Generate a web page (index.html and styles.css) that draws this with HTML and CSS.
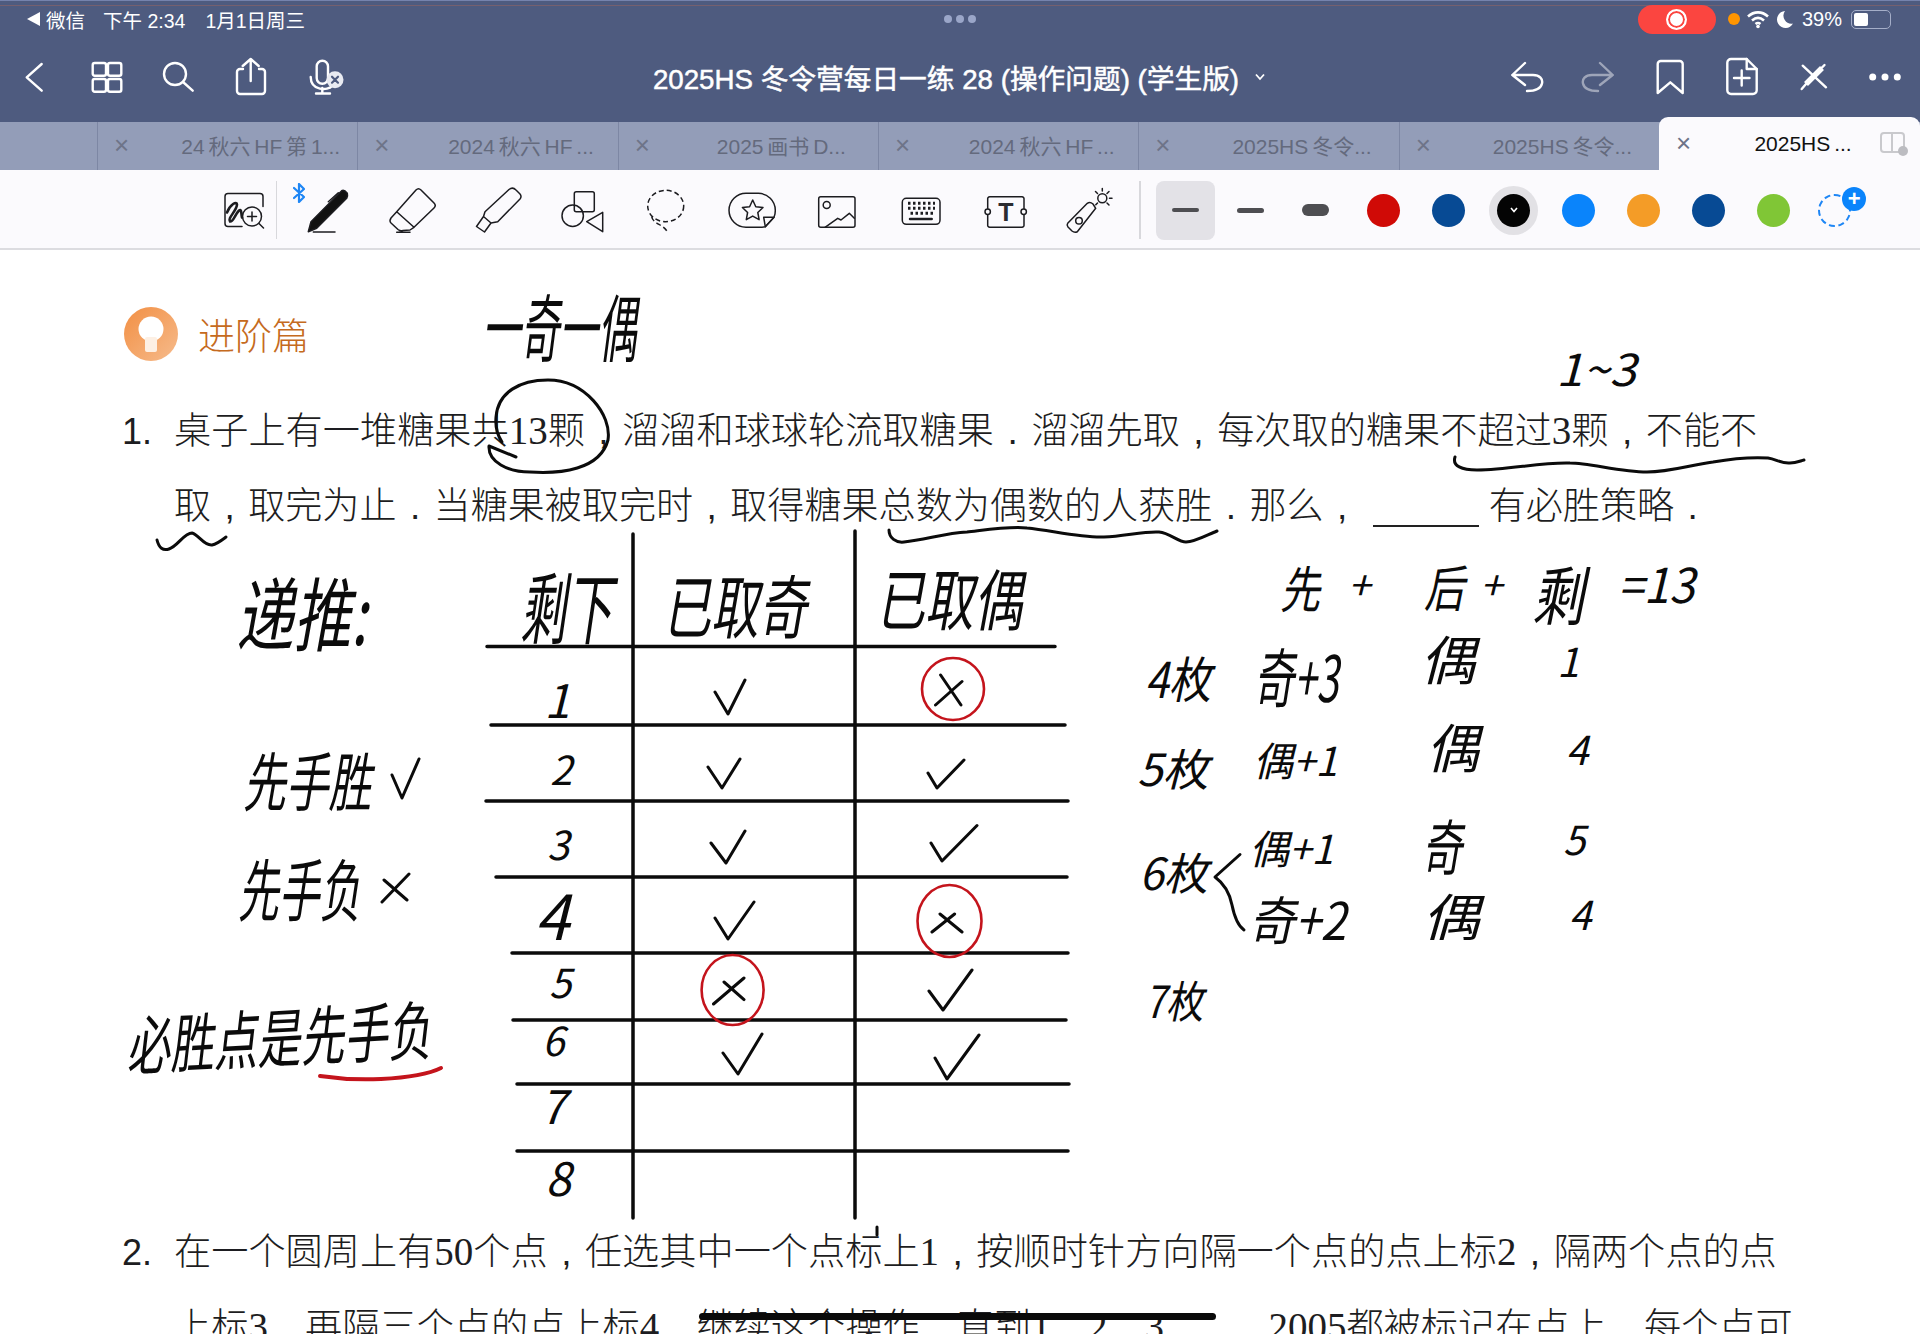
FILE: index.html
```html
<!DOCTYPE html>
<html lang="zh-CN">
<head>
    <meta charset="UTF-8">
    <meta name="viewport" content="width=device-width, initial-scale=1.0">
    <title>2025HS冬令营每日一练 28</title>
    <link rel="stylesheet" href="styles.css">
</head>
<body>
<div class="page">
    <header class="appbar">
        <div class="strip"></div>
        <div class="status">
            <div class="status-left">
                <span class="wechat-back"></span><span>微信</span>
                <span class="status-time">下午 2:34</span>
                <span class="status-date">1月1日周三</span>
            </div>
            <div class="status-dots"><i></i><i></i><i></i></div>
            <div class="status-right">
                <div class="rec"><span class="rec-dot"></span></div>
                <span class="mic-dot"></span>
                <svg class="wifi" width="24" height="20" viewBox="0 0 24 20"><path d="M2 7.500C8 2 16 2 22 7.500" /><path d="M6 11.500C10 8 14 8 18 11.500" /><path d="M9.500 15C11 13.800 13 13.800 14.500 15" /><circle cx="12" cy="17.500" r="1.800" /></svg>
                <svg class="moon" width="18" height="20" viewBox="0 0 18 20"><path d="M9 2A8.500 8.500 0 1 0 17 14.500A8 8 0 0 1 9 2Z" /></svg>
                <span class="battery-text">39%</span>
                <div class="battery"><span class="battery-fill"></span></div>
            </div>
        </div>
        <nav class="navrow">
            <div class="nav-group">
                <div class="nav-btn"><svg width="40" height="40" viewBox="0 0 40 40"><path d="M25.700 7L10.700 20.300L25.700 33.700" /></svg></div>
                <div class="nav-btn"><svg width="40" height="40" viewBox="0 0 40 40"><rect x="4.700" y="6" width="13.300" height="12.700" rx="2" /><rect x="20" y="6" width="13.300" height="12.700" rx="2" /><rect x="4.700" y="22" width="13.300" height="12.700" rx="2" /><rect x="20" y="22" width="13.300" height="12.700" rx="2" /></svg></div>
                <div class="nav-btn"><svg width="40" height="40" viewBox="0 0 40 40"><circle cx="15" cy="17" r="11" /><path d="M23 25L32.700 33.700" /></svg></div>
                <div class="nav-btn"><svg width="40" height="40" viewBox="0 0 40 40"><path d="M11 12H8A3 3 0 0 0 5 15V34A3 3 0 0 0 8 37H30A3 3 0 0 0 33 34V15A3 3 0 0 0 30 12H27" /><path d="M18.700 24V2.500M10.700 9L18.700 2L26.700 9" /></svg></div>
                <div class="nav-btn"><svg width="40" height="40" viewBox="0 0 40 40"><rect x="12.700" y="3.700" width="11.300" height="23" rx="5.600" /><path d="M6.700 20C6.700 34 24 34 28 29M18.300 31V36M12 36.500H26" /><circle class="mic-badge" cx="31" cy="22.700" r="8.500" /><path class="mic-x" d="M28 19.700L34 25.700M34 19.700L28 25.700" /></svg></div>
            </div>
            <div class="doc-title">2025HS 冬令营每日一练 28 (操作问题) (学生版)<svg class="title-caret" width="14" height="10" viewBox="0 0 14 10"><path d="M3 2.500L7 7L11 2.500" /></svg></div>
            <div class="nav-group nav-group-right">
                <div class="nav-btn"><svg width="40" height="40" viewBox="0 0 40 40"><path d="M18 6L5.300 18L18 28M5.300 18H26C33 18 36 22 35 26.500C34 31 30 34 20 34" /></svg></div>
                <div class="nav-btn nav-off"><svg width="40" height="40" viewBox="0 0 40 40"><path d="M22 6L34.700 18L22 28M34.700 18H14C7 18 4 22 5 26.500C6 31 10 34 20 34" /></svg></div>
                <div class="nav-btn"><svg width="40" height="40" viewBox="0 0 40 40"><path d="M7.700 36V7A3 3 0 0 1 10.700 4H29.700A3 3 0 0 1 32.700 7V36L20.300 25.300Z" /></svg></div>
                <div class="nav-btn"><svg width="40" height="40" viewBox="0 0 40 40"><path d="M25.700 2H10A3.700 3.700 0 0 0 6.300 5.700V33.300A3.700 3.700 0 0 0 10 37H32A3.700 3.700 0 0 0 35.700 33.300V12Z" /><path d="M25.700 2V12H35.700M20.700 13.500V28.500M13 21H28.500" /></svg></div>
                <div class="nav-btn"><svg width="40" height="40" viewBox="0 0 40 40"><path d="M9.700 8.700L33 30.300" /><path class="pen-stroke" d="M29 11L13 27" /><path d="M31.500 8L27 12.500M13 27L8.700 32" /></svg></div>
                <div class="nav-btn"><svg width="40" height="40" viewBox="0 0 40 40"><circle class="nav-dot" cx="8.700" cy="20" r="3.500" /><circle class="nav-dot" cx="21" cy="20" r="3.500" /><circle class="nav-dot" cx="33.300" cy="20" r="3.500" /></svg></div>
            </div>
        </nav>
    </header>

    <div class="tabs">
        <div class="tab-spacer"></div>
        <div class="tab"><span class="tab-close">×</span><span class="tab-title">24 秋六 HF 第 1...</span></div>
        <div class="tab"><span class="tab-close">×</span><span class="tab-title">2024 秋六 HF ...</span></div>
        <div class="tab"><span class="tab-close">×</span><span class="tab-title">2025 画书 D...</span></div>
        <div class="tab"><span class="tab-close">×</span><span class="tab-title">2024 秋六 HF ...</span></div>
        <div class="tab"><span class="tab-close">×</span><span class="tab-title">2025HS 冬令...</span></div>
        <div class="tab"><span class="tab-close">×</span><span class="tab-title">2025HS 冬令...</span></div>
        <div class="tab tab-active">
            <span class="tab-close">×</span><span class="tab-title">2025HS ...</span>
            <svg class="tab-split" width="28" height="24" viewBox="0 0 28 24"><rect x="1" y="1" width="23" height="19" rx="3" /><path d="M12 1V20" /><circle cx="23" cy="19" r="5" /></svg>
        </div>
    </div>

    <div class="toolbar">
        <div class="tool tool-first">
            <svg width="56" height="56" viewBox="0 0 56 56"><g transform="translate(4 2.500)"><path d="M43 22V12A3 3 0 0 0 40 9H8A3 3 0 0 0 5 12V39A3 3 0 0 0 8 42H22" /><circle cx="32" cy="32" r="9.500" /><path d="M39 39L43.500 43.500M32 27.500V36.500M27.500 32H36.500" /><path class="scribble" d="M7 28C10 20 17 16 17 20C17 26 7 34 10 37C13 38 15 30 19 26C22 24 21 30 22 33" /></g></svg>
        </div>
        <div class="tool tool-pen">
            <svg class="bluetooth" width="12" height="20" viewBox="0 0 12 20"><path d="M1 5L11 14L6 19V1L11 6L1 15" /></svg>
            <svg width="56" height="56" viewBox="0 0 56 56"><path class="solid" d="M9.300 49.700L12 39.700L42.700 8.700Q45 7 48.300 11.300Q49 14 47.700 16.300L17.700 46.300Z" /><path d="M29.300 19.700L39.300 10.700M14.300 50H36" /></svg>
        </div>
        <div class="tool">
            <svg width="56" height="56" viewBox="0 0 56 56"><path d="M11.700 29.700L31 8Q33.500 5.500 36 8L49 21Q51.500 23.500 49 26L29 45.300M11.700 29.700L29 45.300M11.700 29.700L6 36Q4 39 6 41L13 47.500Q15.500 49.500 18 48.500L25 48L29 45.300M11.700 50.300H25" /></svg>
        </div>
        <div class="tool">
            <svg width="56" height="56" viewBox="0 0 56 56"><path d="M15 29.700L39 7.500Q42.700 4.500 46 8L50 12Q52 14.500 50 17L27.700 39.700L21 41L13.500 34.500ZM13.500 34.500L6.500 44.500L14.500 50L21 41" /></svg>
        </div>
        <div class="tool">
            <svg width="56" height="56" viewBox="0 0 56 56"><rect x="20.300" y="9.700" width="20" height="20" rx="2" /><circle cx="18.700" cy="33.700" r="10.700" /><path d="M48.700 30.300V49.700L32.700 39.700Z" /></svg>
        </div>
        <div class="tool">
            <svg width="56" height="56" viewBox="0 0 56 56"><ellipse class="dashed" cx="26.700" cy="24" rx="18" ry="15.700" /><path class="dashed" d="M12.700 34.700C14 42 24 42 28.300 49.700" /></svg>
        </div>
        <div class="tool">
            <svg width="56" height="56" viewBox="0 0 56 56"><path d="M22 11.300H34A17 17 0 0 1 51.300 28.500C51.300 30 51 33 50 35.300L41.300 44.700C40 45 38 45.300 36 45.300H22A17 17 0 0 1 22 11.300Z" /><path d="M39.700 35.300H50L41.300 44.700Z" /><path d="M28.700 18L31.800 24.700L39 25.500L33.800 30.500L35.100 37.700L28.700 34.100L22.300 37.700L23.600 30.500L18.400 25.500L25.600 24.700Z" /></svg>
        </div>
        <div class="tool">
            <svg width="56" height="56" viewBox="0 0 56 56"><rect x="10.700" y="14.700" width="36.300" height="30.600" rx="2" /><circle cx="18.700" cy="23" r="3.500" /><path d="M17 45.300L29.700 36.300L33 38L41.300 31.300L46.300 36.300" /></svg>
        </div>
        <div class="tool">
            <svg width="56" height="56" viewBox="0 0 56 56"><rect x="9.300" y="16.300" width="37.700" height="26" rx="4" /><path class="keys" d="M15 21.300H42M15 26.300H42M17.500 31.300H40" /><path class="bar" d="M17 37H38.700" /></svg>
        </div>
        <div class="tool">
            <svg width="56" height="56" viewBox="0 0 56 56"><path d="M9.700 26.500V17A2 2 0 0 1 11.700 14.700H44A2 2 0 0 1 46 17V26.500M9.700 33V43A2 2 0 0 0 11.700 45.300H44A2 2 0 0 0 46 43V33" /><circle cx="9.700" cy="29.700" r="2.700" /><circle cx="45.700" cy="29.700" r="2.700" /><text class="tool-t" x="28" y="38.500" text-anchor="middle">T</text></svg>
        </div>
        <div class="tool">
            <svg width="56" height="56" viewBox="0 0 56 56"><path d="M5.700 41.300L25.300 21.300Q28 19.500 31 22L33.700 26.300L15.300 49.700Q12.500 51 10 49L6 45Q4.500 43 5.700 41.300Z" /><circle cx="17" cy="38.700" r="3.300" /><circle cx="40.300" cy="16.300" r="4.500" /><path d="M40.300 6.500V9M50 16.300H47.500M33.500 9.500L35.500 11.500M47 9.500L45 11.500M47 23L45 21M33.800 22.800L35.500 21" /></svg>
        </div>
        <div class="tool-divider"></div>
        <div class="stroke-opt stroke-selected"><span class="stroke-line stroke-thin"></span></div>
        <div class="stroke-opt"><span class="stroke-line stroke-mid"></span></div>
        <div class="stroke-opt"><span class="stroke-line stroke-thick"></span></div>
        <div class="colors">
            <div class="color"><span class="swatch swatch-red"></span></div>
            <div class="color"><span class="swatch swatch-navy"></span></div>
            <div class="color color-active"><span class="swatch swatch-black"><svg width="12" height="8" viewBox="0 0 12 8"><path d="M3 2L6 5.500L9 2" /></svg></span></div>
            <div class="color"><span class="swatch swatch-blue"></span></div>
            <div class="color"><span class="swatch swatch-orange"></span></div>
            <div class="color"><span class="swatch swatch-navy"></span></div>
            <div class="color"><span class="swatch swatch-green"></span></div>
            <div class="color-add"><span class="add-ring"></span><span class="add-badge">+</span></div>
        </div>
    </div>

    <main class="doc">
        <div class="section-head">
            <svg width="54" height="54" viewBox="0 0 54 54"><defs><linearGradient id="bulbBg" x1="0" y1="0" x2="1" y2="1"><stop offset="0" stop-color="#f28f43" /><stop offset="1" stop-color="#f6bb8c" /></linearGradient></defs><circle cx="27" cy="27" r="27" fill="url(#bulbBg)" /><circle cx="27" cy="22" r="12.500" fill="#fff" /><rect x="21" y="30" width="12" height="15" rx="2" fill="#fdf0e4" /></svg>
            <span class="section-name">进阶篇</span>
        </div>
        <div class="q-line"><span class="q-num">1.</span>桌子上有一堆糖果共<span class="num">13</span>颗<span class="p">,</span>溜溜和球球轮流取糖果<span class="p">.</span>溜溜先取<span class="p">,</span>每次取的糖果不超过<span class="num">3</span>颗<span class="p">,</span>不能不</div>
        <div class="q-line q-line-tight">取<span class="p">,</span>取完为止<span class="p">.</span>当糖果被取完时<span class="p">,</span>取得糖果总数为偶数的人获胜<span class="p">.</span>那么<span class="p">,</span><span class="blank"></span>有必胜策略<span class="p">.</span></div>
        <div class="work-space"></div>
        <div class="q-line"><span class="q-num">2.</span>在一个圆周上有<span class="num">50</span>个点<span class="p">,</span>任选其中一个点标上<span class="num">1</span><span class="p">,</span>按顺时针方向隔一个点的点上标<span class="num">2</span><span class="p">,</span>隔两个点的点</div>
        <div class="q-line">上标<span class="num">3</span><span class="p">,</span>再隔三个点的点上标<span class="num">4</span><span class="p">,</span>继续这个操作<span class="p">,</span>直到<span class="num">1</span><span class="p">,</span><span class="num">2</span><span class="p">,</span><span class="num">3</span><span class="p">,</span><span class="ellipsis">…</span><span class="p">,</span><span class="num">2005</span>都被标记在点上<span class="p">.</span>每个点可</div>
    </main>

    <!-- handwritten notes on the page, coordinates are the page itself -->
    <svg class="ink" width="1920" height="1334" viewBox="0 0 1920 1334">
        <path class="rule" d="M487 646.500H1055M491 725H1065M486 801H1068M496 877H1067M512 953H1068M513 1020H1066M517 1084H1069M517 1151H1068M633 534V1218M855 531V1218" />
        <path class="pen" d="M516 457L489 446C488 462 508 472 530 472C560 474 600 470 608 440C612 415 585 380 548 380C520 380 498 392 496 417C495 428 498 436 502 442" />
        <path class="pen" d="M1455 457C1452 466 1462 470 1477 470C1510 470 1540 462 1570 463C1590 463 1620 472 1647 472C1670 472 1690 465 1713 462C1730 459 1750 457 1768 458C1776 459 1782 464 1790 463C1796 463 1800 461 1804 460" />
        <path class="pen" d="M157 540C159 548 163 551 169 549C178 546 184 533 192 533C198 534 204 546 212 545C217 544 222 540 226 537" />
        <path class="pen" d="M889 530C889 538 896 543 904 542C925 540 945 533 967 532C985 530 1010 526 1027 528C1050 530 1080 538 1104 537C1125 536 1145 531 1159 532C1170 533 1178 542 1186 542C1195 542 1207 535 1217 531" />
        <path class="pen" d="M877 1227V1235" />

        <path class="pen" d="M715 692L728 714L745 680M708 767L722 788L740 759M711 843L726 863L745 831M715 918L728 939L754 902M723 1053L738 1074L762 1034" />
        <path class="pen" d="M928 773L937 788L964 760M931 843L942 861L977 825.500M929 991L943 1010L972 970M935 1058L947 1079L979 1035" />
        <path class="pen" d="M940.600 675L961 705M962 681.500L935.500 705M940 914L962 932M954.600 914L932 932M724 982L744 999.600M744 978L713.500 1004" />
        <ellipse class="red" cx="953" cy="689" rx="31" ry="31" />
        <ellipse class="red" cx="949.500" cy="921" rx="32" ry="36" />
        <ellipse class="red" cx="732.600" cy="990" rx="31" ry="35" />
        <path class="red red-thick" d="M320 1076C340 1079 360 1080 381 1079C400 1078 425 1076 441 1068" />

        <path class="pen" d="M392 775L402 798L419 759M384 880L407 900M409 874L382 902" />
        <path class="pen" d="M1240 854.500L1215 877C1226 885 1230 895 1232 905C1234 915 1237 925 1244 930" />

        <text class="note note-lg" transform="translate(482 356) scale(0.84 1.600)">一奇一偶</text>
        <text class="note note-md" transform="translate(1556 386) scale(1.200 1.100)">1~3</text>
        <text class="note note-lg" transform="translate(236 645) scale(1.250 1.750)">递推:</text>
        <text class="note note-lg" transform="translate(520 638) scale(1 1.700)">剩下</text>
        <text class="note note-lg" transform="translate(663 633) scale(1.040 1.500)">已取奇</text>
        <text class="note note-lg" transform="translate(876 625) scale(1.060 1.450)">已取偶</text>

        <text class="note note-lg digit" x="557" y="718">1</text>
        <text class="note note-md digit" x="561" y="785">2</text>
        <text class="note note-md digit" x="558" y="860">3</text>
        <text class="note note-xl digit" x="552" y="940">4</text>
        <text class="note note-md digit" x="560" y="998">5</text>
        <text class="note note-md digit" x="553" y="1056">6</text>
        <text class="note note-lg digit" x="553" y="1124">7</text>
        <text class="note note-lg digit" x="558" y="1196">8</text>

        <text class="note note-md" transform="translate(243 806) scale(1.070 1.600)">先手胜</text>
        <text class="note note-md" transform="translate(238 916) scale(1.020 1.700)">先手负</text>
        <text class="note note-md" transform="translate(127 1070) rotate(-3) scale(1.090 1.600)">必胜点是先手负</text>

        <text class="note note-md" transform="translate(1280 608) scale(1 1.250)">先</text>
        <text class="note note-md" x="1348" y="600">+</text>
        <text class="note note-md" transform="translate(1424 607) scale(1 1.250)">后</text>
        <text class="note note-md" x="1480" y="600">+</text>
        <text class="note note-md" transform="translate(1532 620) scale(1.300 1.600)">剩</text>
        <text class="note note-md" transform="translate(1618 603) scale(1.150 1.200)">=13</text>

        <text class="note note-sm" transform="translate(1145 698) scale(1.250 1.450)">4枚</text>
        <text class="note note-md" transform="translate(1254 702) scale(1 1.600)">奇+3</text>
        <text class="note note-lg" transform="translate(1420 680) scale(1.200 1.150)">偶</text>
        <text class="note note-md digit" x="1568" y="677">1</text>

        <text class="note note-sm" transform="translate(1137 786) scale(1.350 1.300)">5枚</text>
        <text class="note note-md" x="1253" y="776">偶+1</text>
        <text class="note note-lg" transform="translate(1426 768) scale(1.150 1.150)">偶</text>
        <text class="note note-md digit" x="1577" y="765">4</text>

        <text class="note note-sm" transform="translate(1139 890) scale(1.300 1.300)">6枚</text>
        <text class="note note-md" x="1249" y="864">偶+1</text>
        <text class="note note-md" transform="translate(1422 870) scale(1 1.500)">奇</text>
        <text class="note note-md digit" x="1574" y="855">5</text>

        <text class="note note-md" transform="translate(1249 940) scale(1.150 1.300)">奇+2</text>
        <text class="note note-lg" transform="translate(1422 936) scale(1.250 1.100)">偶</text>
        <text class="note note-md digit" x="1580" y="930">4</text>

        <text class="note note-sm" transform="translate(1145 1018) scale(1.100 1.300)">7枚</text>
    </svg>

    <div class="home-bar"></div>
</div>
</body>
</html>
```

FILE: styles.css
```css
* {
    box-sizing: border-box;
}
html, body {
    margin: 0;
    padding: 0;
}
body {
    font-family: "Liberation Sans", "Noto Sans CJK SC", sans-serif;
    background: #fff;
}
.page {
    position: relative;
    width: 1920px;
    height: 1334px;
    overflow: hidden;
    background: #fff;
}

/* top bar */
.appbar {
    height: 122px;
    background: #4e5b7f;
    color: #fff;
}
.strip {
    height: 6px;
    border-top: 1px solid #7583ad;
    border-bottom: 1px solid #75606f;
}
.status {
    display: grid;
    grid-template-columns: 1fr auto 1fr;
    grid-template-rows: 26px;
    align-items: center;
    height: 26px;
    font-size: 19.500px;
}
.status-left {
    display: flex;
    align-items: center;
    padding-left: 27px;
}
.wechat-back {
    width: 0;
    height: 0;
    border-top: 7px solid transparent;
    border-bottom: 7px solid transparent;
    border-right: 13px solid #fff;
    margin-right: 6px;
}
.status-time {
    margin-left: 18px;
}
.status-date {
    margin-left: 20px;
}
.status-dots {
    display: flex;
    gap: 4px;
}
.status-dots i {
    width: 8px;
    height: 8px;
    border-radius: 50%;
    background: #9aa6c8;
}
.status-right {
    display: flex;
    align-items: center;
    justify-content: flex-end;
    height: 26px;
    padding-right: 29px;
}
.rec {
    display: flex;
    align-items: center;
    justify-content: center;
    flex: none;
    width: 78px;
    height: 29px;
    border-radius: 15px;
    background: #fb4540;
}
.rec-dot {
    width: 21px;
    height: 21px;
    border-radius: 50%;
    background: #fff;
    border: 2px solid #fff;
    box-shadow: inset 0 0 0 2px #fb4540;
}
.mic-dot {
    width: 12px;
    height: 12px;
    margin-left: 12px;
    border-radius: 50%;
    background: #ff9500;
}
.wifi {
    margin-left: 6px;
    fill: none;
    stroke: #fff;
    stroke-width: 2.600;
}
.wifi circle {
    fill: #fff;
    stroke: none;
}
.moon {
    margin-left: 6px;
    fill: #fff;
}
.battery-text {
    margin-left: 8px;
    font-size: 20px;
}
.battery {
    position: relative;
    width: 40px;
    height: 19px;
    margin-left: 9px;
    padding: 2px;
    border: 1.500px solid #a5aec8;
    border-radius: 5px;
}
.battery-fill {
    display: block;
    width: 14px;
    height: 100%;
    background: #fff;
    border-radius: 2px;
}
.navrow {
    display: grid;
    grid-template-columns: 1fr auto 1fr;
    align-items: center;
    height: 80px;
    margin-top: 5px;
}
.nav-group {
    display: flex;
}
.nav-group-right {
    justify-content: flex-end;
}
.nav-btn {
    display: flex;
    justify-content: center;
    width: 72px;
}
.nav-group-right .nav-btn {
    width: 71.500px;
}
.nav-btn svg {
    fill: none;
    stroke: #fff;
    stroke-width: 2.400;
    stroke-linecap: round;
    stroke-linejoin: round;
}
.nav-off {
    opacity: 0.45;
}
.nav-btn .mic-badge {
    fill: #e9ebf2;
    stroke: none;
}
.nav-btn .mic-x {
    stroke: #4e5b7f;
    stroke-width: 2.200;
}
.nav-btn .pen-stroke {
    stroke-width: 5.500;
    stroke-linecap: butt;
}
.nav-btn .nav-dot {
    fill: #fff;
    stroke: none;
}
.doc-title {
    display: flex;
    align-items: center;
    font-size: 27.700px;
    font-weight: 400;
    -webkit-text-stroke: 0.500px #fff;
    white-space: nowrap;
}
.title-caret {
    margin-left: 14px;
    fill: none;
    stroke: #fff;
    stroke-width: 1.800;
}

/* tabs */
.tabs {
    display: flex;
    height: 48px;
    background: #939db8;
}
.tab-spacer {
    width: 97px;
}
.tab {
    display: flex;
    align-items: center;
    width: 260.400px;
    padding: 0 0 2px 16px;
    border-left: 1px solid #7d87a4;
    color: #646a7d;
    font-size: 21px;
    word-spacing: -2px;
    white-space: nowrap;
}
.tab-close {
    width: 50px;
    font-size: 26px;
    font-weight: 400;
    color: #6e7488;
}
.tab-title {
    flex: 1;
    text-align: center;
}
.tab-active {
    position: relative;
    width: 261px;
    height: 53px;
    margin-top: -5px;
    padding: 0 0 0 17px;
    border-left: 0;
    border-radius: 9px 9px 0 0;
    background: #fbfafd;
    color: #111;
}
.tab-active .tab-title {
    padding-right: 40px;
}
.tab-split {
    position: absolute;
    right: 12px;
    top: 15px;
    fill: none;
    stroke: #c9c9cd;
    stroke-width: 2;
}
.tab-split circle {
    fill: #bcbcc1;
    stroke: none;
}

/* tools */
.toolbar {
    display: flex;
    align-items: center;
    height: 80px;
    padding: 2px 0 0 202px;
    background: #fbfafd;
    border-bottom: 2px solid #dcdce0;
}
.tool {
    position: relative;
    display: flex;
    justify-content: center;
    align-items: center;
    flex: none;
    width: 84.700px;
    height: 58px;
}
.tool svg {
    fill: none;
    stroke: #1c1c20;
    stroke-width: 1.500;
    stroke-linejoin: round;
    stroke-linecap: round;
}
.tool-first {
    width: 75px;
    padding-left: 9px;
    border-right: 1.500px solid #d8d8dc;
}
.tool-pen {
    width: 93.500px;
    padding-left: 6.500px;
}
.tool .bluetooth {
    position: absolute;
    left: 16px;
    top: 2px;
    stroke: #1e86f5;
    stroke-width: 2.200;
}
.tool .solid {
    fill: #111;
}
.tool .scribble {
    stroke-width: 2.600;
}
.tool .dashed {
    stroke-dasharray: 5 3;
    stroke-linecap: butt;
}
.tool .keys {
    stroke-width: 3;
    stroke-dasharray: 2.500 2.500;
    stroke-linecap: butt;
}
.tool .bar {
    stroke-width: 2.500;
}
.tool-t {
    font-family: "Liberation Sans", sans-serif;
    font-size: 25px;
    font-weight: 700;
    fill: #2c2c30;
    stroke: none;
}
.tool-divider {
    flex: none;
    width: 1.500px;
    height: 58px;
    margin: 0 15px 0 6.500px;
    background: #d8d8dc;
}
.stroke-opt {
    display: flex;
    align-items: center;
    justify-content: center;
    flex: none;
    width: 65px;
    height: 59px;
}
.stroke-selected {
    width: 59px;
    margin-right: 3px;
    border-radius: 8px;
    background: #e3e2e7;
}
.stroke-line {
    display: block;
    width: 27px;
    background: #4e4e52;
}
.stroke-thin {
    height: 3.500px;
    border-radius: 2px;
}
.stroke-mid {
    height: 5px;
    border-radius: 3px;
}
.stroke-thick {
    height: 12px;
    border-radius: 6px;
}
.colors {
    display: flex;
    align-items: center;
    margin-left: 3.500px;
}
.color {
    display: flex;
    align-items: center;
    justify-content: center;
    width: 65px;
    height: 48px;
}
.color-active::before {
    content: "";
    position: absolute;
    width: 49px;
    height: 49px;
    border-radius: 50%;
    background: #e2e1e5;
}
.swatch {
    position: relative;
    display: flex;
    align-items: center;
    justify-content: center;
    width: 33px;
    height: 33px;
    border-radius: 50%;
}
.swatch svg {
    fill: none;
    stroke: #fff;
    stroke-width: 1.600;
}
.swatch-red {
    background: #d00a06;
}
.swatch-navy {
    background: #074a94;
}
.swatch-black {
    background: #040404;
}
.swatch-blue {
    background: #0a84fb;
}
.swatch-orange {
    background: #f49c27;
}
.swatch-green {
    background: #80c636;
}
.color-add {
    position: relative;
    width: 60px;
    height: 48px;
}
.add-ring {
    position: absolute;
    left: 12px;
    top: 8px;
    width: 33px;
    height: 33px;
    border: 2px dashed #1e86f5;
    border-radius: 50%;
}
.add-badge {
    position: absolute;
    left: 36px;
    top: 1px;
    width: 24px;
    height: 24px;
    border-radius: 50%;
    background: #0a84fb;
    color: #fff;
    font-size: 22px;
    line-height: 23px;
    text-align: center;
    font-weight: 700;
}

/* the printed page */
.doc {
    padding: 54px 0 0 122px;
    font-family: "Noto Sans CJK SC", sans-serif;
    font-weight: 300;
    font-size: 37.200px;
    color: #1d1d21;
}
.section-head {
    display: flex;
    align-items: center;
    height: 60px;
    margin-bottom: 27px;
    margin-left: 2px;
    gap: 20px;
}
.section-name {
    font-size: 37px;
    color: #c56a20;
}
.q-line {
    height: 75px;
    padding-left: 52px;
    line-height: 75px;
    white-space: nowrap;
}
.q-line-tight {
    font-size: 37.100px;
}
.q-num {
    display: inline-block;
    width: 52px;
    margin-left: -52px;
    font-family: "Liberation Sans", sans-serif;
    font-size: 36px;
}
.num {
    font-family: "Liberation Serif", serif;
    font-size: 39px;
}
.p {
    display: inline-block;
    width: 1em;
    font-family: "Liberation Sans", sans-serif;
    text-align: center;
}
.ellipsis {
    display: inline-block;
    width: 30px;
    font-family: "Liberation Serif", serif;
    text-align: center;
}
.blank {
    display: inline-block;
    width: 106px;
    height: 2px;
    margin: 0 10px 0 12px;
    background: #222;
    vertical-align: -8px;
}
.work-space {
    height: 671px;
}

/* handwriting */
.ink {
    position: absolute;
    left: 0;
    top: 0;
    pointer-events: none;
}
.rule {
    fill: none;
    stroke: #0b0b0b;
    stroke-width: 3.500;
    stroke-linecap: round;
}
.pen {
    fill: none;
    stroke: #0b0b0b;
    stroke-width: 3;
    stroke-linecap: round;
    stroke-linejoin: round;
}
.red {
    fill: none;
    stroke: #c4141c;
    stroke-width: 2.600;
}
.red-thick {
    stroke-width: 4;
    stroke-linecap: round;
}
.note {
    font-family: "Noto Sans CJK SC", "Lato", sans-serif;
    font-style: italic;
    fill: #0b0b0b;
}
.note-xl {
    font-size: 62px;
}
.note-lg {
    font-size: 46px;
}
.note-md {
    font-size: 40px;
}
.note-sm {
    font-size: 34px;
}
.digit {
    text-anchor: middle;
}

.home-bar {
    position: absolute;
    left: 699px;
    top: 1313px;
    width: 517px;
    height: 7px;
    border-radius: 4px;
    background: #0a0a0a;
}
```
